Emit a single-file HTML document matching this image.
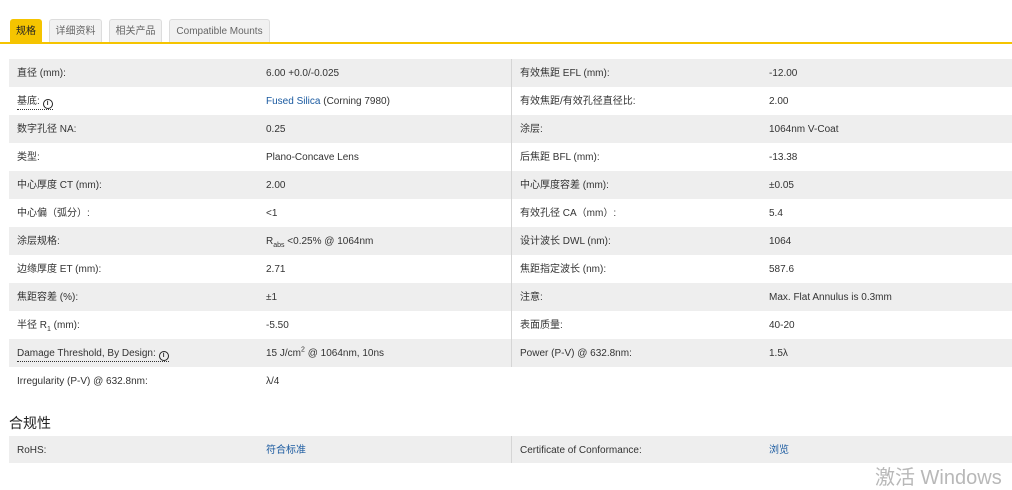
<!DOCTYPE html>
<html><head><meta charset="utf-8"><style>
body{margin:0;width:1012px;height:489px;background:#fff;font-family:"Liberation Sans","Noto Sans CJK SC",sans-serif;font-size:10px;color:#333;position:relative;overflow:hidden}
.tab{position:absolute;top:19px;height:23px;line-height:24px;text-align:center;background:#f1f1f1;border:1px solid #ddd;border-bottom:none;border-radius:3px 3px 0 0;color:#666;font-size:10px;box-sizing:border-box}
.line{position:absolute;left:0;top:42px;width:1012px;height:2px;background:#f5c400}
.row{position:absolute;left:9px;width:1003px;height:28px;line-height:30px}
.g{background:#eeeeee}
.row > span{position:absolute;top:0;white-space:nowrap}
.div{position:absolute;left:511px;width:1px;background:#d5d5d5}
a{color:#1a5aa0;text-decoration:none}
.u{border-bottom:1px dotted #333;line-height:12px;display:inline-block}
.i{display:inline-block;width:10px;height:10px;border:1.5px solid #222;border-radius:50%;font-size:7px;line-height:8px;text-align:center;font-weight:bold;box-sizing:border-box;vertical-align:-1px;font-style:normal}
sub,sup{font-size:7px;line-height:0}
</style></head><body>
<div class="tab" style="left:10px;width:32px;background:#f5c400;border-color:#f5c400;color:#222">规格</div>
<div class="tab" style="left:49px;width:53px">详细资料</div>
<div class="tab" style="left:109px;width:53px">相关产品</div>
<div class="tab" style="left:169px;width:101px">Compatible Mounts</div>
<div class="line"></div>

<div class="row g" style="top:59px"><span style="left:8px">直径 (mm):</span><span style="left:257px">6.00 +0.0/-0.025</span><span style="left:511px">有效焦距 EFL (mm):</span><span style="left:760px">-12.00</span></div>
<div class="row" style="top:87px"><span style="left:8px"><span class="u">基底: <i class="i">i</i></span></span><span style="left:257px"><a>Fused Silica</a> (Corning 7980)</span><span style="left:511px">有效焦距/有效孔径直径比:</span><span style="left:760px">2.00</span></div>
<div class="row g" style="top:115px"><span style="left:8px">数字孔径 NA:</span><span style="left:257px">0.25</span><span style="left:511px">涂层:</span><span style="left:760px">1064nm V-Coat</span></div>
<div class="row" style="top:143px"><span style="left:8px">类型:</span><span style="left:257px">Plano-Concave Lens</span><span style="left:511px">后焦距 BFL (mm):</span><span style="left:760px">-13.38</span></div>
<div class="row g" style="top:171px"><span style="left:8px">中心厚度 CT (mm):</span><span style="left:257px">2.00</span><span style="left:511px">中心厚度容差 (mm):</span><span style="left:760px">±0.05</span></div>
<div class="row" style="top:199px"><span style="left:8px">中心偏（弧分）:</span><span style="left:257px">&lt;1</span><span style="left:511px">有效孔径 CA（mm）:</span><span style="left:760px">5.4</span></div>
<div class="row g" style="top:227px"><span style="left:8px">涂层规格:</span><span style="left:257px">R<sub>abs</sub> &lt;0.25% @ 1064nm</span><span style="left:511px">设计波长 DWL (nm):</span><span style="left:760px">1064</span></div>
<div class="row" style="top:255px"><span style="left:8px">边缘厚度 ET (mm):</span><span style="left:257px">2.71</span><span style="left:511px">焦距指定波长 (nm):</span><span style="left:760px">587.6</span></div>
<div class="row g" style="top:283px"><span style="left:8px">焦距容差 (%):</span><span style="left:257px">±1</span><span style="left:511px">注意:</span><span style="left:760px">Max. Flat Annulus is 0.3mm</span></div>
<div class="row" style="top:311px"><span style="left:8px">半径 R<sub>1</sub> (mm):</span><span style="left:257px">-5.50</span><span style="left:511px">表面质量:</span><span style="left:760px">40-20</span></div>
<div class="row g" style="top:339px"><span style="left:8px"><span class="u">Damage Threshold, By Design: <i class="i">i</i></span></span><span style="left:257px">15 J/cm<sup>2</sup> @ 1064nm, 10ns</span><span style="left:511px">Power (P-V) @ 632.8nm:</span><span style="left:760px">1.5λ</span></div>
<div class="row" style="top:367px"><span style="left:8px">Irregularity (P-V) @ 632.8nm:</span><span style="left:257px">λ/4</span></div>
<div class="div" style="top:59px;height:308px"></div>

<div style="position:absolute;left:9px;top:413px;font-size:14px;color:#222">合规性</div>
<div class="row g" style="top:436px;height:27px;line-height:29px"><span style="left:8px">RoHS:</span><span style="left:257px"><a>符合标准</a></span><span style="left:511px">Certificate of Conformance:</span><span style="left:760px"><a>浏览</a></span></div>
<div class="div" style="top:436px;height:27px"></div>
<div style="position:absolute;left:875px;top:461px;font-size:20px;color:#b8b8b8">激活 Windows</div>
</body></html>
